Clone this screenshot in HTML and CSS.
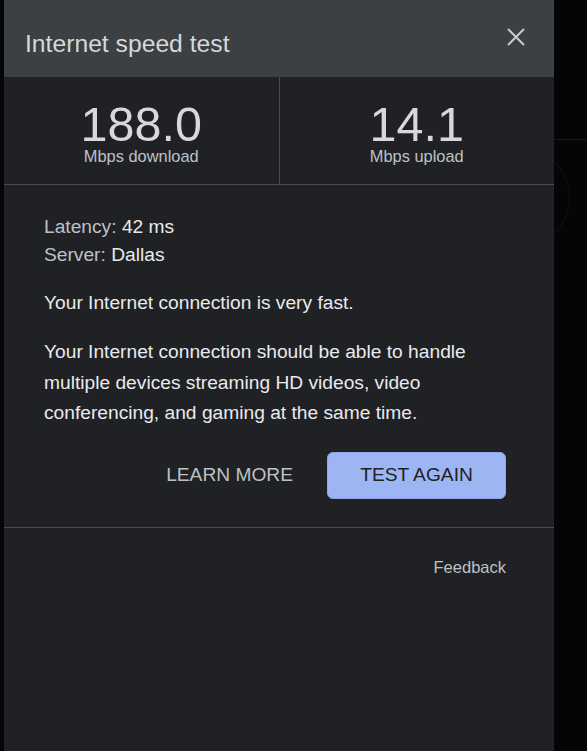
FILE: index.html
```html
<!DOCTYPE html>
<html lang="en">
<head>
  <meta charset="UTF-8">
  <meta name="viewport" content="width=device-width, initial-scale=1.0">
  <title>Internet speed test</title>
  <link rel="stylesheet" href="styles.css">
</head>
<body>

<div class="screen">
  <div class="edge"></div>

  <div class="panel">
    <div class="panel-head">
      <h1>Internet speed test</h1>
      <button class="close-btn" aria-label="Close">
        <svg width="18" height="18" viewBox="0 0 18 18">
          <path d="M1 1L17 17M17 1L1 17" stroke="currentColor" stroke-width="2" fill="none"/>
        </svg>
      </button>
    </div>

    <div class="stats">
      <div class="stat">
        <div class="stat-value">188.0</div>
        <div class="stat-unit">Mbps download</div>
      </div>
      <div class="stat">
        <div class="stat-value">14.1</div>
        <div class="stat-unit">Mbps upload</div>
      </div>
    </div>

    <div class="details">
      <div class="meta">
        <div><span class="meta-label">Latency:</span> 42 ms</div>
        <div><span class="meta-label">Server:</span> Dallas</div>
      </div>
      <p class="summary">Your Internet connection is very fast.</p>
      <p class="desc">Your Internet connection should be able to handle multiple devices streaming HD videos, video conferencing, and gaming at the same time.</p>
      <div class="actions">
        <button class="text-btn">LEARN MORE</button>
        <button class="primary-btn">TEST AGAIN</button>
      </div>
    </div>

    <div class="panel-foot">
      <a class="feedback" href="#">Feedback</a>
    </div>
  </div>

  <div class="backdrop">
    <div class="backdrop-line"></div>
    <div class="backdrop-ring"></div>
  </div>
</div>

</body>
</html>
```

FILE: styles.css
```css
body {
  margin: 0;
  background-color: #040505;
  font-family: "Liberation Sans", Arial, sans-serif;
  color: #e8eaed;
}
.screen {
  display: flex;
  height: 751px;
  overflow: hidden;
}
.edge {
  width: 4px;
  flex-shrink: 0;
  background-color: #050606;
}
.panel {
  width: 550px;
  flex-shrink: 0;
  background-color: #202124;
}
.panel-head {
  height: 77px;
  box-sizing: border-box;
  padding: 28px 29px 0 21px;
  display: flex;
  justify-content: space-between;
  align-items: flex-start;
  background-color: #3c4043;
}
.panel-head h1 {
  margin: 0;
  font-size: 24.7px;
  line-height: 31px;
  font-weight: normal;
  color: #d6d8db;
}
.close-btn {
  padding: 0;
  border: none;
  background: none;
  color: #c8cbcf;
  cursor: pointer;
  display: flex;
}
.stats {
  display: flex;
  border-bottom: 1px solid #4a4c50;
}
.stat {
  flex: 1;
  height: 107px;
  box-sizing: border-box;
  padding-top: 26px;
  text-align: center;
}
.stat + .stat {
  border-left: 1px solid #4a4c50;
}
.stat-value {
  font-size: 48.5px;
  line-height: 42px;
  color: #d6d8db;
}
.stat-unit {
  margin-top: 4px;
  font-size: 16.4px;
  line-height: 14px;
  color: #bdc1c6;
}
.details {
  padding: 28px 48px 28px 40px;
  border-bottom: 1px solid #4a4c50;
  font-size: 19.2px;
}
.meta {
  line-height: 28px;
}
.meta-label {
  color: #bdc1c6;
}
.summary {
  margin: 20px 0 0;
  line-height: 28px;
}
.desc {
  margin: 20px 0 0;
  line-height: 30.5px;
}
.actions {
  margin-top: 23px;
  display: flex;
  justify-content: flex-end;
  align-items: center;
  gap: 34px;
}
.actions button {
  font-family: inherit;
  font-size: 19.2px;
  cursor: pointer;
}
.text-btn {
  padding: 0;
  border: none;
  background: none;
  color: #bdc1c6;
}
.primary-btn {
  width: 179px;
  height: 47px;
  border: 1px solid #8ca6e6;
  border-radius: 6px;
  background-color: #9cb5f3;
  color: #202124;
}
.panel-foot {
  padding: 29px 48px 0;
  text-align: right;
}
.feedback {
  font-size: 16.5px;
  line-height: 20px;
  color: #bdc1c6;
  text-decoration: none;
}
.backdrop {
  flex: 1;
  position: relative;
  overflow: hidden;
  background-color: #040505;
}
.backdrop-line {
  margin-top: 139px;
  height: 1px;
  background-color: #161717;
}
.backdrop-ring {
  position: absolute;
  left: -44px;
  top: 157px;
  width: 58px;
  height: 80px;
  border: 1px solid #111212;
  border-radius: 50%;
}
```
